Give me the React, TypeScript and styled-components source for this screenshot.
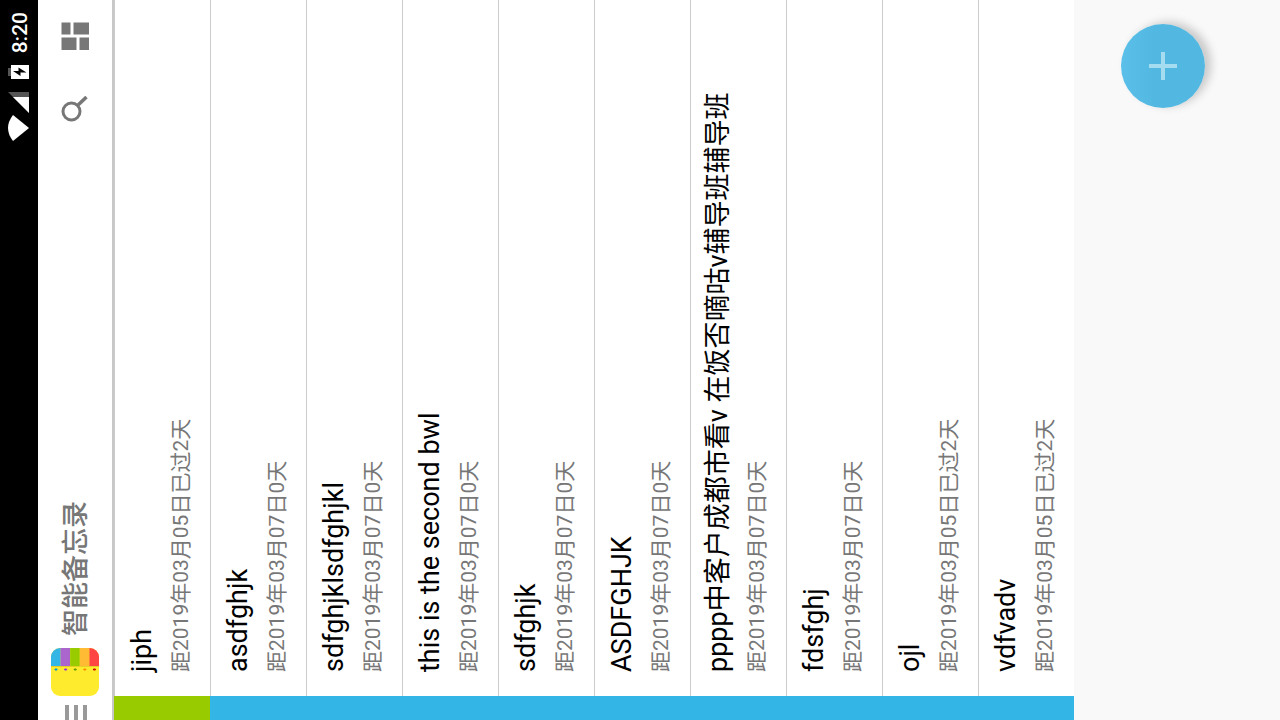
import React from 'react';
import styled, { createGlobalStyle } from 'styled-components';

const GlobalStyle = createGlobalStyle`
  * { box-sizing: border-box; }
  html, body { margin: 0; background: #f9f9f9; }
  body { font-family: Roboto, "Noto Sans CJK SC", sans-serif; }
`;

const Viewport = styled.div`
  height: 100vh;
  overflow: hidden;
`;

/* The phone is held sideways: the portrait screen is turned a quarter turn. */
const Screen = styled.div`
  position: relative;
  display: flex;
  flex-direction: column;
  width: 100vh;
  height: 100vw;
  background: #f9f9f9;
  transform-origin: top left;
  transform: translateY(100vh) rotate(-90deg);
`;

const StatusBar = styled.div`
  flex: none;
  display: flex;
  align-items: center;
  justify-content: flex-end;
  height: 38px;
  padding-right: 12px;
  background: #000;
  color: #fff;
`;

const StatusIcons = styled.svg`
  display: block;
  margin-right: 12px;
`;

const Clock = styled.time`
  padding-top: 2px;
  font-size: 21px;
  line-height: 36px;
  font-weight: 500;
`;

const Toolbar = styled.header`
  flex: none;
  display: flex;
  align-items: center;
  height: 76px;
  padding-right: 22px;
  border-bottom: 2px solid #c8c8c8;
  background: #fff;
`;

const IconButton = styled.button`
  flex: none;
  display: block;
  padding: 0;
  border: 0;
  background: none;
  color: #777;
  svg { display: block; }
`;

const Logo = styled.svg`
  flex: none;
  margin: 0 12px 0 9px;
`;

const AppTitle = styled.h1`
  flex: 1;
  margin: 0;
  padding-top: 2px;
  font-size: 27px;
  line-height: 40px;
  font-weight: 500;
  color: #777;
`;

const Actions = styled.div`
  display: flex;
  gap: 46px;
`;

const NoteList = styled.ul`
  margin: 0;
  padding: 0;
  list-style: none;
`;

const NoteRow = styled.li<{ $color: string }>`
  display: flex;
  height: 96px;
  background: #fff;
  &::before {
    content: "";
    width: 24px;
    background: ${(p) => p.$color};
  }
`;

const NoteBody = styled.div`
  flex: 1;
  padding: 9px 24px 0;
  border-top: 1px solid #ccc;
  white-space: nowrap;
`;

const NoteTitle = styled.div`
  font-size: 27px;
  line-height: 36px;
  color: #000;
`;

const NoteDate = styled.div`
  margin-top: 7px;
  font-size: 21px;
  line-height: 28px;
  color: #777;
`;

const AddButton = styled.button`
  position: absolute;
  right: 24px;
  bottom: 75px;
  display: grid;
  place-items: center;
  width: 84px;
  height: 84px;
  padding: 0;
  border: 0;
  border-radius: 50%;
  background: linear-gradient(#5ac0e9, #53b8e1 40%);
  box-shadow: 2px 6px 10px rgba(0, 0, 0, 0.2);
`;

const GREEN = '#99cc00';
const BLUE = '#33b5e5';
const past = '距2019年03月05日已过2天';
const today = '距2019年03月07日0天';

const notes = [
  { title: 'jiph', date: past, color: GREEN },
  { title: 'asdfghjk', date: today, color: BLUE },
  { title: 'sdfghjklsdfghjkl', date: today, color: BLUE },
  { title: 'this is the second bwl', date: today, color: BLUE },
  { title: 'sdfghjk', date: today, color: BLUE },
  { title: 'ASDFGHJK', date: today, color: BLUE },
  { title: 'pppp中客户成都市看v 在饭否嘀咕v辅导班辅导班', date: today, color: BLUE },
  { title: 'fdsfghj', date: today, color: BLUE },
  { title: 'ojl', date: past, color: BLUE },
  { title: 'vdfvadv', date: past, color: BLUE },
];

const stripes = [
  { fill: '#33b5e5', dot: '#0099cc' },
  { fill: '#aa66cc', dot: '#9933cc' },
  { fill: '#99cc00', dot: '#669900' },
  { fill: '#ffbb33', dot: '#ff8800' },
  { fill: '#ff4444', dot: '#cc0000' },
];

export default function App() {
  return (
    <>
      <GlobalStyle />
      <Viewport>
        <Screen>
          <StatusBar>
            <StatusIcons width="76" height="22" viewBox="0 0 76 22" aria-hidden="true">
              <path d="M0 5Q13 -5 26 5L13 21Z" fill="#fff" />
              <path d="M28 21L49 0V21Z" fill="#555" />
              <path d="M28 21L44 5V21Z" fill="#fff" />
              <path d="M65 0H73V3H65Z" fill="#555" />
              <path d="M62 3H76V21H62Z" fill="#fff" />
              <path d="M70 5L65 12.500H68.500V18.500L73.500 10.500H70Z" fill="#000" />
            </StatusIcons>
            <Clock>8:20</Clock>
          </StatusBar>
          <Toolbar>
            <IconButton aria-label="菜单">
              <svg width="15" height="24" viewBox="0 0 15 24" fill="#999">
                <path d="M0 2H15V6H0ZM0 11H15V15H0ZM0 20H15V24H0Z" />
              </svg>
            </IconButton>
            <Logo width="48" height="48" viewBox="0 0 48 48" aria-hidden="true">
              <clipPath id="logo"><rect width="48" height="48" rx="9" /></clipPath>
              <g clipPath="url(#logo)">
                <rect width="48" height="48" fill="#ffeb2d" />
                {stripes.map((s, i) => (
                  <g key={s.fill}>
                    <rect x="30" y={i * 9.6} width="18" height="9.6" fill={s.fill} />
                    <rect x="25.500" y={i * 9.6 + 4} width="2" height="2" fill={s.dot} />
                    <rect x="26" y={i * 9.6 + 3.5} width="1" height="3" fill={s.dot} />
                  </g>
                ))}
                <rect x="29" width="1" height="48" fill="#e6cf24" />
              </g>
            </Logo>
            <AppTitle>智能备忘录</AppTitle>
            <Actions>
              <IconButton aria-label="搜索">
                <svg width="26" height="28" viewBox="0 0 26 28" fill="none" stroke="currentColor" strokeWidth="3">
                  <circle cx="10.500" cy="10.500" r="8.500" />
                  <path d="M16.500 16.500L25 25.500" strokeWidth="3.500" />
                </svg>
              </IconButton>
              <IconButton aria-label="切换视图">
                <svg width="28" height="28" viewBox="0 0 28 28" fill="currentColor">
                  <path d="M0 0.500H12.500V15.500H0ZM0 18.500H12.500V28H0ZM15.500 0.500H27.500V9.500H15.500ZM15.500 12.500H27.500V28H15.500Z" />
                </svg>
              </IconButton>
            </Actions>
          </Toolbar>
          <NoteList>
            {notes.map((n) => (
              <NoteRow key={n.title} $color={n.color}>
                <NoteBody>
                  <NoteTitle>{n.title}</NoteTitle>
                  <NoteDate>{n.date}</NoteDate>
                </NoteBody>
              </NoteRow>
            ))}
          </NoteList>
          <AddButton aria-label="添加">
            <svg width="28" height="28" viewBox="0 0 28 28" stroke="#a6dcf0" strokeWidth="4">
              <path d="M14 0V28M0 14H28" />
            </svg>
          </AddButton>
        </Screen>
      </Viewport>
    </>
  );
}
